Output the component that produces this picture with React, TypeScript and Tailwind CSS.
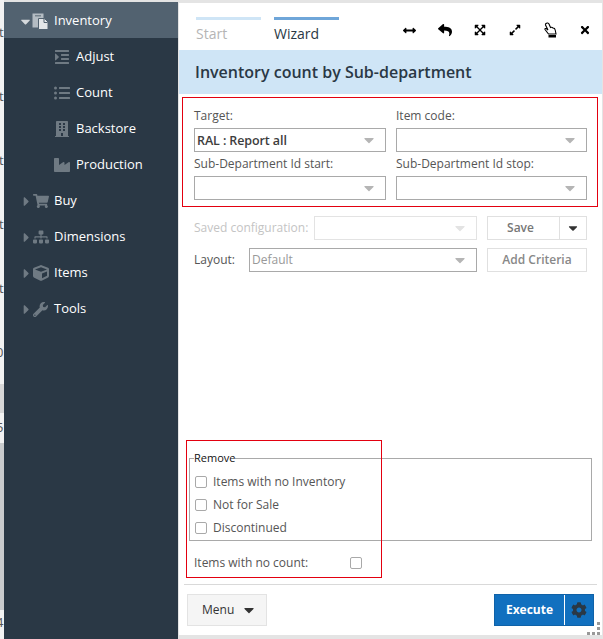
import type { ReactNode } from 'react';
import {
	FaArrowsAltH,
	FaBuilding,
	FaCaretDown,
	FaCaretRight,
	FaCog,
	FaCube,
	FaExpandAlt,
	FaExpandArrowsAlt,
	FaIndent,
	FaIndustry,
	FaListUl,
	FaReply,
	FaShoppingCart,
	FaSitemap,
	FaTimes,
	FaWrench,
} from 'react-icons/fa';

const subItems = [
	{ label: 'Adjust', icon: <FaIndent size={16} /> },
	{ label: 'Count', icon: <FaListUl size={16} /> },
	{ label: 'Backstore', icon: <FaBuilding size={16} /> },
	{ label: 'Production', icon: <FaIndustry size={16} /> },
];

const topItems = [
	{ label: 'Buy', icon: <FaShoppingCart size={16} /> },
	{ label: 'Dimensions', icon: <FaSitemap size={16} /> },
	{ label: 'Items', icon: <FaCube size={16} /> },
	{ label: 'Tools', icon: <FaWrench size={15} /> },
];

function FilesIcon() {
	return (
		<svg width="17" height="17" viewBox="0 0 17 17" className="-ml-[1px]">
			<rect x="0.5" y="0.5" width="11" height="14" fill="#b4bcc3" />
			<rect x="3" y="2" width="6" height="1.5" fill="#76838e" />
			<path d="M6.5 5.5h6l3.5 3.5v7.5h-9.5z" fill="#e3e6e8" stroke="#526270" />
			<path d="M12 6v3.5h3.5" fill="none" stroke="#526270" />
		</svg>
	);
}

function HandIcon() {
	return (
		<svg width="14" height="16" viewBox="0 0 14 16">
			<path
				d="M3 1.5C4 .5 5.5 1 6 2L7.5 5.5C8.5 5 9.5 5.5 10 6C11 6 12 6.5 12.2 8L13 12H5.5L2 7.5C1.5 6.5 3 6 4 7L5 8L2.5 3C2.3 2.5 2.5 2 3 1.5Z"
				fill="white"
				stroke="black"
				strokeWidth="1.1"
			/>
			<rect x="5.5" y="13" width="7.5" height="2.5" fill="black" />
		</svg>
	);
}

function Sidebar() {
	return (
		<div className="w-[174px] h-[637px] mt-[2px] bg-[#2a3845] text-[13px] text-white shrink-0">
			<div className="h-9 flex items-center pt-[2px] bg-[#526270]">
				<FaCaretDown size={15} className="ml-[14px] text-[#d5d9dc]" />
				<FilesIcon />
				<span className="ml-[5px]">Inventory</span>
			</div>
			{subItems.map((item) => (
				<div key={item.label} className="h-9 flex items-center pt-[2px] pl-[50px]">
					<span className="w-4 text-[#6f7a83]">{item.icon}</span>
					<span className="ml-[6px]">{item.label}</span>
				</div>
			))}
			{topItems.map((item) => (
				<div key={item.label} className="h-9 flex items-center pt-[2px] pl-[15px]">
					<FaCaretRight size={15} className="text-[#6f7a83]" />
					<span className="-ml-[1px] w-4 text-[#6f7a83]">{item.icon}</span>
					<span className="ml-[5px]">{item.label}</span>
				</div>
			))}
		</div>
	);
}

function Select({ value, muted, className }: { value?: string; muted?: boolean; className?: string }) {
	return (
		<div
			className={`h-6 bg-white border flex items-center justify-between pl-[2px] pr-[8px] ${
				muted ? 'border-[#e3e3e3]' : 'border-[#a9a9a9]'
			} ${className ?? ''}`}
		>
			<span className="text-[12.5px] font-semibold text-[#3d3d3d] pt-[2px] tracking-[-0.1px]">{value}</span>
			<FaCaretDown size={16} className={muted ? 'text-[#e3e3e3]' : 'text-[#b5b5b5]'} />
		</div>
	);
}

function Field({ label, value }: { label: string; value?: string }) {
	return (
		<div>
			<div className="h-6 leading-[23px] text-[12px] text-[#555555]">{label}</div>
			<Select value={value} />
		</div>
	);
}

function Check({ children }: { children: ReactNode }) {
	return (
		<div className="flex items-center h-[23.25px] text-[12px] text-[#555555]">
			<span className="w-3 h-3 border border-[#a9a9a9] rounded-[2px] bg-white" />
			<span className="ml-[6px]">{children}</span>
		</div>
	);
}

function Toolbar() {
	return (
		<div className="flex items-center text-black mt-[7px] [&>span]:w-[35px] [&>span]:flex [&>span]:justify-center">
			<span>
				<FaArrowsAltH size={13} />
			</span>
			<span>
				<FaReply size={14} />
			</span>
			<span>
				<FaExpandArrowsAlt size={12} />
			</span>
			<span>
				<FaExpandAlt size={12} />
			</span>
			<span>
				<HandIcon />
			</span>
			<span>
				<FaTimes size={12} />
			</span>
		</div>
	);
}

// the page behind the dialog, only its last few pixels show at the left
function PageEdge() {
	return (
		<div className="w-1 shrink-0 flex flex-col text-[13px] text-[#555555] leading-none overflow-hidden">
			<div className="h-[384px] bg-[#f2f2f2] flex flex-col pt-[26px]">
				<span className="h-[64px] -ml-[1px]">t</span>
				<span className="h-[64px] -ml-[1px]">t</span>
				<span className="h-[64px] -ml-[1px]">t</span>
				<span className="h-[64px] -ml-[1px]">t</span>
				<span className="h-[64px] -ml-[1px]">t</span>
				<span className="-ml-[4px]">0</span>
			</div>
			<div className="h-[29px] bg-[#d7d7d7]" />
			<div className="h-[30px] bg-[#f2f2f2] pt-[8px]">
				<span className="block -ml-[4px]">5</span>
			</div>
			<div className="h-[167px] bg-[#c9cbcd]" />
			<div className="flex-1 bg-[#f2f2f2] pt-[6px]">
				<span className="block -ml-[4px]">4</span>
			</div>
		</div>
	);
}

export default function App() {
	return (
		<div className="w-[603px] h-[639px] overflow-hidden flex bg-[#e4e4e4] font-['Open_Sans',sans-serif]">
			<PageEdge />
			<Sidebar />
			<div className="ml-[1px] mt-[3px] w-[423px] h-[632px] bg-white flex flex-col relative">
				<div className="h-[47px] flex justify-between shrink-0">
					<div className="flex pl-[17px] pt-[14px] gap-[13px]">
						<div className="w-[65px] border-t-[3px] border-[#cfe5f6] pt-[3px] text-[14px] text-[#b5b5b5]">Start</div>
						<div className="w-[65px] border-t-[3px] border-[#6fa6d9] pt-[3px] text-[14px] text-[#2a3845]">Wizard</div>
					</div>
					<Toolbar />
				</div>
				<div className="h-11 shrink-0 bg-[#cfe5f6] flex items-center pl-4 text-[16px] font-semibold text-[#2a3845]">
					Inventory count by Sub-department
				</div>
				<div className="mt-[3px] ml-[3px] w-[416px] h-[110px] shrink-0 border border-[#e3000f] pl-[11px] pr-[10px] pt-[6px] grid grid-cols-[192px_191px] gap-x-[10px] content-start">
					<Field label="Target:" value="RAL : Report all" />
					<Field label="Item code:" />
					<Field label="Sub-Department Id start:" />
					<Field label="Sub-Department Id stop:" />
				</div>
				<div className="mt-[9px] ml-[15px] flex items-center h-6 shrink-0">
					<span className="w-[120px] text-[12px] text-[#c4c4c4]">Saved configuration:</span>
					<Select muted className="w-[163px]" />
					<div className="ml-[10px] w-[100px] h-6 border border-[#e0e0e0] flex text-[12px] font-semibold text-[#777777]">
						<span className="flex-1 flex items-center justify-center border-r border-[#e0e0e0] pr-[6px]">Save</span>
						<span className="w-[26px] flex items-center justify-center text-[#333333]">
							<FaCaretDown size={14} />
						</span>
					</div>
				</div>
				<div className="mt-2 ml-[15px] flex items-center h-6 shrink-0">
					<span className="w-[55px] text-[12px] text-[#555555]">Layout:</span>
					<div className="w-[228px] h-6 border border-[#a9a9a9] flex items-center justify-between pl-[2px] pr-[8px]">
						<span className="text-[12px] text-[#999999]">Default</span>
						<FaCaretDown size={16} className="text-[#b5b5b5]" />
					</div>
					<div className="ml-[10px] w-[100px] h-6 border border-[#e0e0e0] flex items-center justify-center text-[12px] font-semibold text-[#888888]">
						Add Criteria
					</div>
				</div>
				<div className="flex-1" />
				<div className="ml-[10px] w-[403px] h-[83px] shrink-0 border border-[#a9a9a9] relative pl-[5px] pt-[11px]">
					<span className="absolute left-[4px] -top-[9px] bg-white text-[11px] leading-[16px] text-[#111111]">Remove</span>
					<Check>Items with no Inventory</Check>
					<Check>Not for Sale</Check>
					<Check>Discontinued</Check>
				</div>
				<div className="mt-[11px] ml-[15px] w-[168px] h-[22px] shrink-0 flex items-center justify-between text-[12px] text-[#555555]">
					<span>Items with no count:</span>
					<span className="w-3 h-3 border border-[#a9a9a9] rounded-[2px] bg-white" />
				</div>
				<div className="mt-[10px] mx-[5px] h-px shrink-0 bg-[#d9d9d9]" />
				<div className="mt-[9px] mb-[9px] mx-[8px] h-8 shrink-0 flex justify-between">
					<div className="w-20 border border-[#e3e3e3] bg-[#f5f5f5] flex items-center pl-[14px] gap-[7px] text-[12px] font-medium text-[#333333]">
						Menu
						<FaCaretDown size={16} />
					</div>
					<div className="w-[100px] bg-[#1170bf] border border-[#0f62a8] flex text-[12px] font-bold text-white">
						<span className="flex-1 flex items-center justify-center border-r border-white">Execute</span>
						<span className="w-[28px] flex items-center justify-center text-[#2a3845]">
							<FaCog size={16} />
						</span>
					</div>
				</div>
				{/* red outline lying over the Remove group */}
				<div className="absolute left-[7px] top-[437px] w-[196px] h-[138px] border border-[#e3000f] pointer-events-none" />
				<div className="absolute right-[2px] bottom-0 grid grid-cols-3 gap-[2px]">
					<span />
					<span />
					<span className="w-[3px] h-[3px] bg-[#999999]" />
					<span />
					<span />
					<span className="w-[3px] h-[3px] bg-[#999999]" />
					<span className="w-[3px] h-[3px] bg-[#999999]" />
					<span className="w-[3px] h-[3px] bg-[#999999]" />
					<span className="w-[3px] h-[3px] bg-[#999999]" />
				</div>
			</div>
		</div>
	);
}
